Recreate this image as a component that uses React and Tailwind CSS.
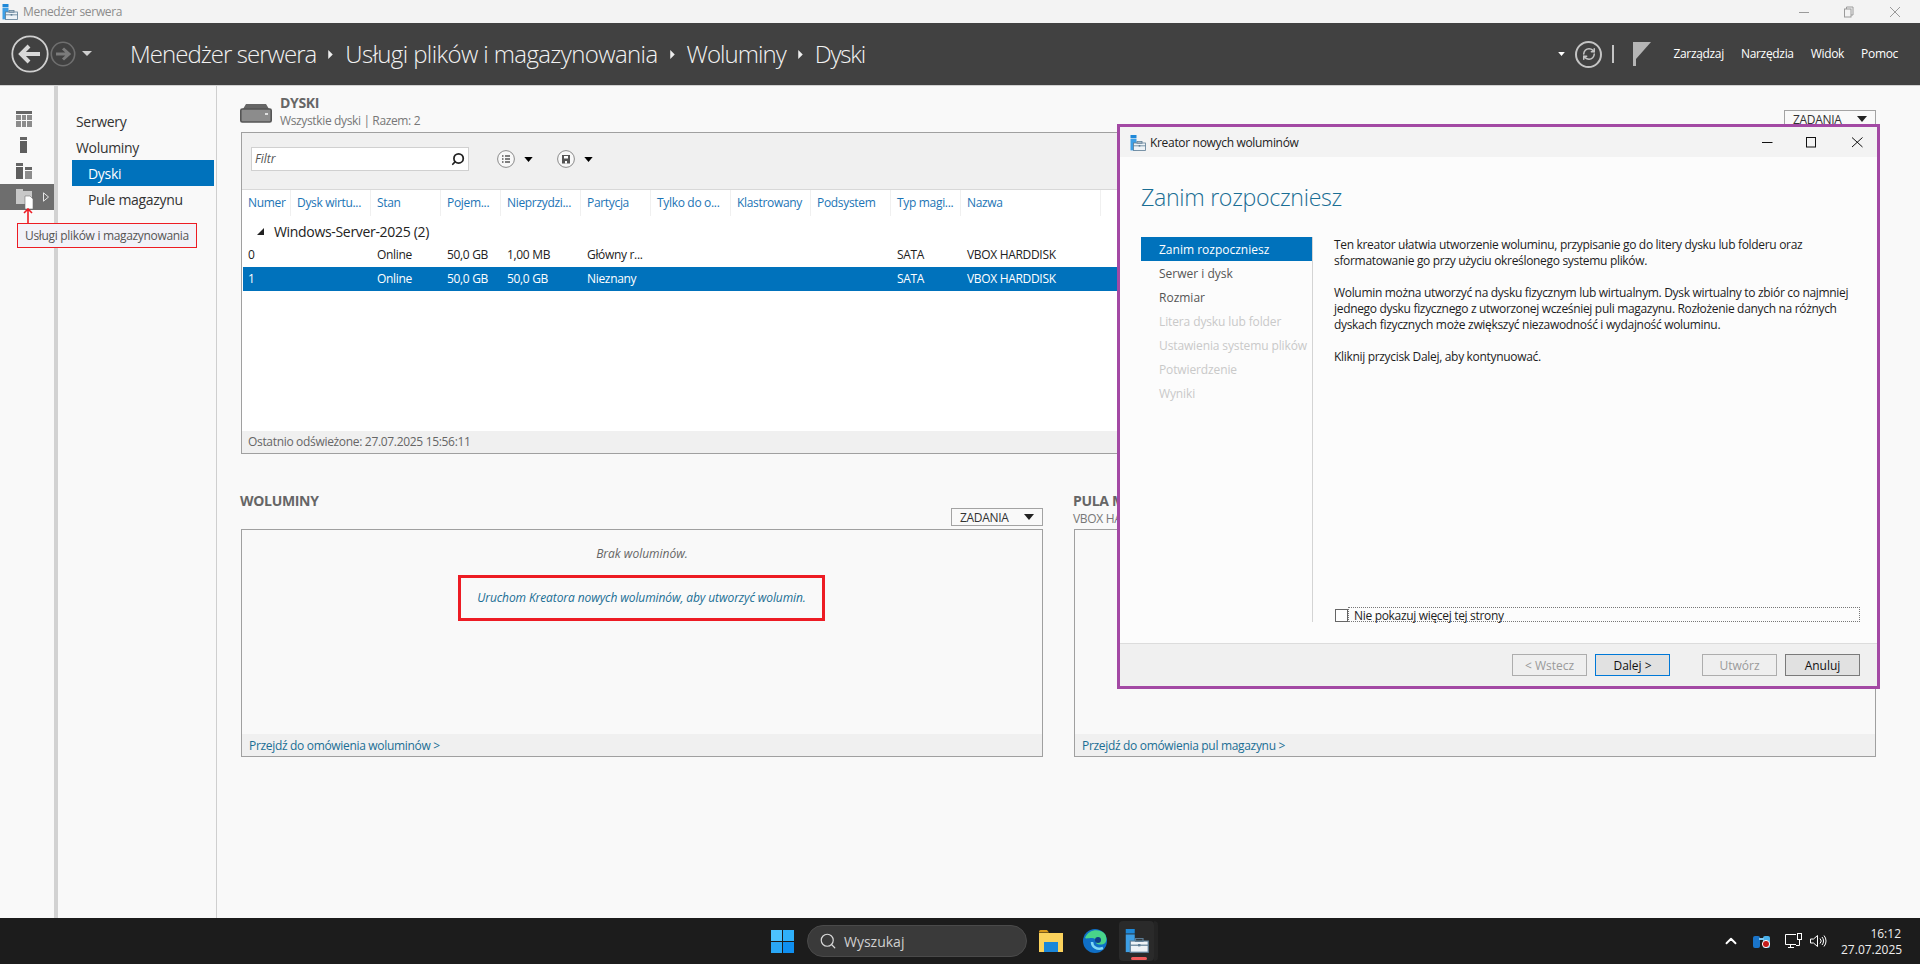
import React from "react";
import { RefreshCw, Search, ChevronUp } from "lucide-react";

const columns = [
  { label: "Numer", w: "w-[49px]" },
  { label: "Dysk wirtu...", w: "w-[80px]" },
  { label: "Stan", w: "w-[70px]" },
  { label: "Pojem...", w: "w-[60px]" },
  { label: "Nieprzydzi...", w: "w-[80px]" },
  { label: "Partycja", w: "w-[70px]" },
  { label: "Tylko do o...", w: "w-[80px]" },
  { label: "Klastrowany", w: "w-[80px]" },
  { label: "Podsystem", w: "w-[80px]" },
  { label: "Typ magi...", w: "w-[70px]" },
  { label: "Nazwa", w: "w-[140px]" },
];

const rows = [
  ["0", "", "Online", "50,0 GB", "1,00 MB", "Główny r...", "", "", "", "SATA", "VBOX HARDDISK"],
  ["1", "", "Online", "50,0 GB", "50,0 GB", "Nieznany", "", "", "", "SATA", "VBOX HARDDISK"],
];

const steps = [
  { label: "Zanim rozpoczniesz", state: "active" },
  { label: "Serwer i dysk", state: "normal" },
  { label: "Rozmiar", state: "normal" },
  { label: "Litera dysku lub folder", state: "disabled" },
  { label: "Ustawienia systemu plików", state: "disabled" },
  { label: "Potwierdzenie", state: "disabled" },
  { label: "Wyniki", state: "disabled" },
];

const ServerIcon = ({ className }) => (
  <svg viewBox="0 0 16 16" className={className}>
    <rect x="0.5" y="0" width="6" height="3" fill="#1e88d8" />
    <rect x="0.5" y="3.6" width="6" height="11.8" fill="#3d9fe6" />
    <rect x="3.5" y="8" width="12" height="7.5" fill="#eef3f7" stroke="#5c7c94" strokeWidth="0.8" />
    <rect x="7" y="6.4" width="5" height="1.8" fill="none" stroke="#5c7c94" strokeWidth="0.8" />
    <path d="M3.5 10.8h12" stroke="#5c7c94" strokeWidth="0.8" />
    <rect x="8.7" y="10" width="1.6" height="1.6" fill="#5c7c94" />
  </svg>
);

const DownTriangle = ({ className }) => (
  <svg viewBox="0 0 10 6" className={className}>
    <path d="M0 0h10L5 6z" fill="currentColor" />
  </svg>
);

const HeaderArrow = () => (
  <svg viewBox="0 0 5 10" className="mx-[12px] h-[9px] w-[5px] shrink-0">
    <path d="M0 0l5 5-5 5z" fill="#eeeeee" />
  </svg>
);

const TasksButton = () => (
  <div className="flex h-[18px] w-[92px] items-center justify-between border border-[#a3a3a3] bg-[#f9f9f9] pl-[8px] pr-[8px] text-[12px] text-[#333]">
    <span className="pt-[1px]">ZADANIA</span>
    <DownTriangle className="h-[6px] w-[10px] text-[#222]" />
  </div>
);

const CircleBtn = ({ children }) => (
  <div className="flex items-center gap-[8px]">
    <svg viewBox="0 0 18 18" className="h-[18px] w-[18px]">
      <circle cx="9" cy="9" r="8.4" fill="#f8f8f8" stroke="#8a8a8a" strokeWidth="1" />
      {children}
    </svg>
    <DownTriangle className="h-[5px] w-[11px] text-black" />
  </div>
);

const WizardButton = ({ children, kind }) => {
  const cls =
    kind === "disabled"
      ? "border-[#adadad] bg-[#efefef] text-[#9a9a9a]"
      : kind === "focus"
        ? "border-[#0078d7] bg-[#e1e1e1] text-[#111]"
        : "border-[#7a7a7a] bg-[#e1e1e1] text-[#111]";
  return (
    <div className={`flex h-[22px] w-[75px] items-center justify-center border pt-[1px] text-[12px] tracking-normal ${cls}`}>
      {children}
    </div>
  );
};

const Wizard = () => (
  <div className="absolute left-[1117px] top-[124px] flex h-[565px] w-[763px] flex-col border-[3px] border-[#a349a4] bg-[#fcfcfc]">
    <div className="flex h-[30px] shrink-0 items-center bg-[#f3f3f3] pl-[10px] pt-[1px] text-[12px] text-[#222]">
      <ServerIcon className="h-[16px] w-[16px]" />
      <span className="ml-[4px] flex-1">Kreator nowych woluminów</span>
      <svg viewBox="0 0 106 12" className="mb-[1px] mr-[14px] h-[12px] w-[106px]" fill="none" stroke="#111" strokeWidth="1">
        <path d="M5 6.5h10.5" />
        <rect x="49.5" y="1.5" width="9" height="9.5" />
        <path d="M95 1.5l10.5 9.5M105.5 1.5L95 11" />
      </svg>
    </div>

    <div className="flex flex-1 flex-col pl-[21px] pr-[17px]">
      <div className="flex h-[80px] shrink-0 items-center pt-[1px] text-[23.2px] font-light text-[#1a6e94]">Zanim rozpoczniesz</div>

      <div className="flex h-[385px] shrink-0">
        <div className="w-[172px] shrink-0 border-r border-[#d4d4d4] text-[12px]">
          {steps.map((s) => (
            <div
              key={s.label}
              className={`flex h-[24px] items-center whitespace-nowrap pl-[18px] pt-[1px] ${
                s.state === "active"
                  ? "w-[171px] bg-[#0072bc] tracking-normal text-white"
                  : s.state === "disabled"
                    ? "tracking-[-0.01em] text-[#c9c9c9]"
                    : "tracking-normal text-[#555]"
              }`}
            >
              {s.label}
            </div>
          ))}
        </div>

        <div className="flex flex-1 flex-col pl-[21px] text-[12px] leading-[16px] text-[#1c1c1c]">
          <div className="flex-1">
            <p className="pb-[16px]">
              Ten kreator ułatwia utworzenie woluminu, przypisanie go do litery dysku lub folderu oraz
              <br />
              sformatowanie go przy użyciu określonego systemu plików.
            </p>
            <p className="pb-[16px]">
              Wolumin można utworzyć na dysku fizycznym lub wirtualnym. Dysk wirtualny to zbiór co najmniej
              <br />
              jednego dysku fizycznego z utworzonej wcześniej puli magazynu. Rozłożenie danych na różnych
              <br />
              dyskach fizycznych może zwiększyć niezawodność i wydajność woluminu.
            </p>
            <p>Kliknij przycisk Dalej, aby kontynuować.</p>
          </div>
          <div className="flex h-[15px] items-center">
            <div className="ml-[1px] mt-[1px] h-[13px] w-[13px] shrink-0 border border-[#666] bg-white" />
            <div className="flex h-[15px] flex-1 items-center border border-dotted border-[#777] pl-[5px] pt-[2px]">
              Nie pokazuj więcej tej strony
            </div>
          </div>
        </div>
      </div>
    </div>

    <div className="flex h-[43px] shrink-0 items-center gap-[8px] border-t border-[#dcdcdc] bg-[#f0f0f0] pr-[17px]">
      <div className="flex flex-1 justify-end gap-[8px]">
        <WizardButton kind="disabled">&lt; Wstecz</WizardButton>
        <WizardButton kind="focus">Dalej &gt;</WizardButton>
      </div>
      <div className="ml-[24px] flex gap-[8px]">
        <WizardButton kind="disabled">Utwórz</WizardButton>
        <WizardButton>Anuluj</WizardButton>
      </div>
    </div>
  </div>
);

const LowerPanel = ({ title, subtitle, link, children }) => (
  <div className="flex flex-col">
    <div className="flex h-[39px] items-start justify-between">
      <div className="-ml-[1px] pt-[3px]">
        <div className="text-[14px] font-bold leading-[16px] text-[#666]">{title}</div>
        {subtitle && <div className="pt-[2px] text-[12px] leading-[16px] text-[#777]">{subtitle}</div>}
      </div>
      <div className="pt-[18px]">
        <TasksButton />
      </div>
    </div>
    <div className="flex h-[228px] flex-col border border-[#a0a0a0]">
      <div className="flex flex-1 flex-col items-center pt-[15px]">{children}</div>
      <div className="flex h-[22px] items-center bg-[#f0f0f0] pl-[7px] pt-[1px] text-[12px] text-[#1a6e94]">{link}</div>
    </div>
  </div>
);

const App = () => {
  return (
    <div className="relative flex h-[964px] w-[1920px] flex-col overflow-hidden bg-[#f9f9f9] font-['Open_Sans',sans-serif] tracking-[-0.02em]">
      {/* pasek tytulu */}
      <div className="flex h-[23px] shrink-0 items-center bg-[#f3f3f3] pl-[2px] text-[12px] text-[#8c8c8c]">
        <ServerIcon className="h-[16px] w-[16px]" />
        <span className="ml-[5px] flex-1">Menedżer serwera</span>
        <svg viewBox="0 0 106 12" className="mr-[15px] h-[12px] w-[106px]" fill="none" stroke="#9a9a9a" strokeWidth="1">
          <path d="M0 6.5h10" />
          <rect x="45.5" y="3" width="6.5" height="8" />
          <path d="M47.5 3V1h6.5v8h-2" />
          <path d="M91 1l10 10M101 1L91 11" />
        </svg>
      </div>

      {/* naglowek */}
      <div className="flex h-[63px] shrink-0 items-center border-b border-[#d2d2d2] bg-[#414141] text-white">
        <svg viewBox="0 0 100 40" className="ml-[11px] h-[40px] w-[100px] shrink-0" fill="none">
          <circle cx="19" cy="20" r="17.7" stroke="#cfcfcf" strokeWidth="1.8" />
          <path d="M29 20H11M18 12l-8 8 8 8" stroke="#d8d8d8" strokeWidth="4" />
          <circle cx="52" cy="20" r="11.7" stroke="#6f6f6f" strokeWidth="1.6" />
          <path d="M45 20h12M52 14.5l6 5.5-6 5.5" stroke="#7b7b7b" strokeWidth="3" />
          <path d="M71 17h10l-5 5z" fill="#cfcfcf" />
        </svg>
        <div className="ml-[19px] flex flex-1 items-center text-[24px] font-light leading-none tracking-[-0.04em] text-[#f2f2f2]">
          <span>Menedżer serwera</span>
          <HeaderArrow />
          <span className="tracking-[-0.0256em]">Usługi plików i magazynowania</span>
          <HeaderArrow />
          <span>Woluminy</span>
          <HeaderArrow />
          <span className="tracking-[-0.05em]">Dyski</span>
        </div>
        <DownTriangle className="h-[4px] w-[7px] text-white" />
        <div className="ml-[10px] flex h-[27px] w-[27px] items-center justify-center rounded-full border-2 border-[#c4c4c4]">
          <RefreshCw size={14} strokeWidth={2.6} className="text-[#c4c4c4]" />
        </div>
        <div className="ml-[10px] h-[18px] w-[2px] bg-[#c4c4c4]" />
        <svg viewBox="0 0 18 24" className="ml-[19px] h-[24px] w-[18px]">
          <rect x="0" y="0" width="3" height="24" fill="#b5b5b5" />
          <path d="M3 0h15L3 17z" fill="#b5b5b5" />
        </svg>
        <div className="ml-[22px] mr-[22px] flex gap-[17px] text-[12px] text-white">
          <span>Zarządzaj</span>
          <span>Narzędzia</span>
          <span>Widok</span>
          <span>Pomoc</span>
        </div>
      </div>

      {/* srodek */}
      <div className="flex min-h-0 flex-1">
        <div className="relative w-[54px] shrink-0 pt-[20px]">
          <div className="flex h-[26px] items-center pl-[16px]">
            <svg viewBox="0 0 16 16" className="h-[16px] w-[16px]">
              <rect width="16" height="3" fill="#666" />
              <path d="M0 4h5v5H0zM6 4h4v5H6zM11 4h5v5h-5zM0 10h5v6H0zM6 10h4v6H6zM11 10h5v6h-5z" fill="#8c8c8c" />
            </svg>
          </div>
          <div className="flex h-[26px] items-center pl-[20px]">
            <svg viewBox="0 0 7 16" className="h-[16px] w-[7px]">
              <rect width="7" height="3" fill="#666" />
              <rect y="4" width="7" height="12" fill="#5e5e5e" />
            </svg>
          </div>
          <div className="flex h-[26px] items-center pl-[16px]">
            <svg viewBox="0 0 16 16" className="h-[16px] w-[16px]">
              <rect width="7" height="3" fill="#666" />
              <rect y="4" width="7" height="12" fill="#5e5e5e" />
              <rect x="9" y="4" width="7" height="3" fill="#666" />
              <rect x="9" y="8" width="7" height="8" fill="#8c8c8c" />
            </svg>
          </div>
          <div className="flex h-[26px] items-center justify-between bg-[#6e6e6e] pl-[16px] pr-[5px]">
            <svg viewBox="0 0 17 20" className="mt-[4px] h-[20px] w-[17px] overflow-visible">
              <path d="M0 0h7v2h9v13H0z" fill="#c8c8c8" />
              <path d="M9 7h5l3 3v10H9z" fill="#fff" stroke="#6e6e6e" strokeWidth="0.6" />
            </svg>
            <svg viewBox="0 0 6 10" className="h-[10px] w-[6px]" fill="none" stroke="#e6e6e6">
              <path d="M.5.8l5 4.2-5 4.2z" />
            </svg>
          </div>
          {/* strzalka i podpowiedz */}
          <svg viewBox="0 0 10 16" className="absolute left-[23px] top-[122px] h-[16px] w-[10px]" fill="none" stroke="#ed1c24" strokeWidth="1.6">
            <path d="M5 16V1M1 5l4-4 4 4" />
          </svg>
          <div className="absolute left-[17px] top-[137px] z-10 flex h-[25px] w-[180px] items-center whitespace-nowrap border border-[#ed1c24] bg-[#f2f2f8] pl-[7px] text-[12px] text-[#555]">
            Usługi plików i magazynowania
          </div>
        </div>
        <div className="w-[4px] shrink-0 bg-[#d2d2d2]" />

        <div className="w-[159px] shrink-0 border-r border-[#cfcfcf] pl-[14px] pt-[22px] text-[14px] text-[#333]">
          <div className="flex h-[26px] items-center pl-[4px]">Serwery</div>
          <div className="flex h-[26px] items-center pl-[4px]">Woluminy</div>
          <div className="flex h-[26px] w-[142px] items-center bg-[#0072bc] pl-[16px] text-white">Dyski</div>
          <div className="flex h-[26px] items-center pl-[16px]">Pule magazynu</div>
        </div>

        <div className="min-w-0 flex-1 pl-[24px] pr-[44px] pt-[10px]">
          <div className="flex h-[36px] items-start justify-between">
            <div className="flex">
              <svg viewBox="0 0 32 20" className="-ml-[1px] mt-[7px] h-[20px] w-[32px]">
                <path d="M3 6 L6 1h20l3 5z" fill="#666" />
                <rect x="0.8" y="6" width="30.4" height="13" rx="1.5" fill="#8c8c8c" stroke="#555" strokeWidth="1.6" />
                <rect x="25" y="10" width="3" height="2" fill="#e0e0e0" />
              </svg>
              <div className="-mt-[1px] pl-[8px]">
                <div className="text-[14px] font-bold leading-[16px] text-[#666]">DYSKI</div>
                <div className="pt-[2px] text-[12px] leading-[16px] tracking-[-0.03em] text-[#777]">Wszystkie dyski | Razem: 2</div>
              </div>
            </div>
            <div className="pt-[14px]">
              <TasksButton />
            </div>
          </div>

          <div className="flex h-[322px] flex-col border border-[#a0a0a0] bg-white">
            <div className="flex h-[57px] shrink-0 items-center gap-[28px] border-b border-[#d8d8d8] bg-[#f0f0f0] pb-[4px] pl-[9px]">
              <div className="flex h-[24px] w-[218px] items-center justify-between border border-[#d0d0d0] bg-white pl-[3px] pr-[3px] text-[12px] italic tracking-normal text-[#555]">
                <span>Filtr</span>
                <Search size={14} strokeWidth={3} className="-scale-x-100 text-[#222]" />
              </div>
              <div className="flex items-center gap-[23px]">
                <CircleBtn>
                  <path d="M5 6h1.5M5 9h1.5M5 12h1.5M8 6h5M8 9h5M8 12h5" stroke="#555" strokeWidth="1.6" />
                </CircleBtn>
                <CircleBtn>
                  <path d="M5 5h8v8.5H5z" fill="#555" />
                  <path d="M7 6h4v2.5H7z" fill="#fff" />
                  <path d="M8 11h2v2.5H8z" fill="#fff" />
                </CircleBtn>
              </div>
            </div>

            <div className="flex h-[26px] shrink-0 text-[12px] text-[#1c74b5]">
              {columns.map((c) => (
                <div key={c.label} className={`${c.w} flex shrink-0 items-center whitespace-nowrap border-r border-[#f0f0f0] pl-[6px]`}>
                  {c.label}
                </div>
              ))}
            </div>
            <div className="flex h-[27px] shrink-0 items-center pl-[15px] pt-[4px] text-[#222]">
              <svg viewBox="0 0 7 7" className="h-[7px] w-[7px]">
                <path d="M7 0v7H0z" fill="#222" />
              </svg>
              <span className="ml-[10px] text-[14px]">Windows-Server-2025 (2)</span>
            </div>
            <div className="min-h-0 flex-1 pl-[1px] text-[12px]">
              {rows.map((r) => (
                <div key={r[0]} className={`flex h-[24px] items-center ${r[0] === "1" ? "bg-[#0072bc] text-white" : "text-[#222]"}`}>
                  {r.map((cell, i) => (
                    <div key={i} className={`${columns[i].w} shrink-0 whitespace-nowrap pl-[6px] ${i === 0 ? "-ml-[1px]" : ""}`}>
                      {cell}
                    </div>
                  ))}
                </div>
              ))}
            </div>
            <div className="flex h-[22px] shrink-0 items-center bg-[#f0f0f0] pl-[6px] text-[12px] text-[#666]">
              Ostatnio odświeżone: 27.07.2025 15:56:11
            </div>
          </div>

          <div className="grid grid-cols-2 gap-[31px] pt-[36px]">
            <LowerPanel title="WOLUMINY" link="Przejdź do omówienia woluminów >">
              <div className="text-[12px] italic tracking-normal text-[#666]">Brak woluminów.</div>
              <div className="mr-[1px] mt-[12px] flex h-[46px] w-[367px] items-center justify-center border-[3px] border-[#ed1c24] text-[12px] italic tracking-[-0.008em] text-[#1a6e94]">
                Uruchom Kreatora nowych woluminów, aby utworzyć wolumin.
              </div>
            </LowerPanel>
            <LowerPanel title="PULA MAGAZYNU" subtitle="VBOX HARDDISK" link="Przejdź do omówienia pul magazynu >" />
          </div>
        </div>
      </div>

      {/* pasek zadan */}
      <div className="flex h-[46px] shrink-0 items-center bg-[#1c1c1c] text-white">
        <svg viewBox="0 0 23 23" className="ml-[771px] h-[23px] w-[23px] shrink-0">
          <path d="M0 0h11v11H0z" fill="#4cc2ff" />
          <path d="M12 0h11v11H12z" fill="#2fb0fa" />
          <path d="M0 12h11v11H0z" fill="#2aa7f5" />
          <path d="M12 12h11v11H12z" fill="#0f8ff0" />
        </svg>
        <div className="ml-[13px] flex h-[32px] w-[220px] shrink-0 items-center rounded-full border border-[#4a4a4a] bg-[#3a3a3a] pl-[11px] text-[14px] tracking-normal text-[#cfcfcf]">
          <Search size={18} strokeWidth={1.6} className="text-[#d8d8d8]" />
          <span className="ml-[7px] pt-[1px]">Wyszukaj</span>
        </div>
        <svg viewBox="0 0 24 22" className="ml-[12px] h-[22px] w-[24px] shrink-0">
          <path d="M0 1.5A1.5 1.5 0 011.5 0H8l2 2.5H0z" fill="#d99a1c" />
          <path d="M0 3h24v19H0z" fill="#fbd25c" />
          <path d="M5 12h14v10H5z" fill="#1b87d9" />
        </svg>
        <svg viewBox="0 0 24 24" className="ml-[20px] h-[24px] w-[24px] shrink-0" fill="none">
          <circle cx="12" cy="12" r="12" fill="#0f6fc6" />
          <path d="M2 9C5 1 15-1 21 4c3 3 3 8 1 10-2 2-7 2-9 0 1-3-1-5-4-5-3 0-6 1-7 0z" fill="#48d48a" />
          <path d="M9 13c0 5 5 8 11 6" stroke="#7fd8f5" strokeWidth="2.5" />
          <circle cx="15" cy="11" r="3" fill="#0f3f88" />
        </svg>
        <div className="relative ml-[12px] flex h-[40px] w-[35px] shrink-0 items-center justify-center rounded-[4px] bg-[#2a2a2a]">
          <ServerIcon className="h-[24px] w-[24px]" />
          <div className="absolute bottom-[1px] left-[12px] h-[3px] w-[16px] rounded-full bg-[#f05a5a]" />
        </div>
        <div className="h-[40px] w-[4px] shrink-0 rounded-r-[4px] bg-[#242424]" />

        <div className="flex flex-1 items-center justify-end pr-[19px]">
          <ChevronUp size={18} strokeWidth={2.5} className="text-white" />
          <svg viewBox="0 0 18 14" className="ml-[13px] h-[14px] w-[18px]">
            <rect x="0" y="2" width="7" height="12" rx="2" fill="#1a74c9" />
            <rect x="10" y="2" width="7" height="12" rx="2" fill="#4ab0ea" />
            <rect x="6" y="4" width="5" height="2" fill="#7fc8f0" />
            <circle cx="13" cy="10" r="3.6" fill="#c41a1a" stroke="#fff" strokeWidth="1" />
          </svg>
          <svg viewBox="0 0 17 16" className="ml-[14px] h-[16px] w-[17px]" fill="none" stroke="#fff" strokeWidth="1">
            <path d="M11 1.5H.5v10H11M5.5 11.5v3M3 14.5h6" />
            <rect x="12.5" y=".5" width="4" height="6" />
            <path d="M14.5 6.5v6H11" />
          </svg>
          <svg viewBox="0 0 17 14" className="ml-[8px] h-[14px] w-[17px]" fill="none" stroke="#fff" strokeWidth="1">
            <path d="M.5 5v4h3l4 3.5v-11l-4 3.5z" />
            <path d="M10 4.5a3.5 3.5 0 010 5M12 3a6 6 0 010 8M14 1.5a8.5 8.5 0 010 11" />
          </svg>
          <div className="ml-[14px] w-[60px] pt-[1px] text-right text-[12px] leading-[16px] tracking-normal text-[#eeeeee]">
            <div>16:12</div>
            <div>27.07.2025</div>
          </div>
        </div>
      </div>

      <Wizard />
    </div>
  );
};

export default App;
